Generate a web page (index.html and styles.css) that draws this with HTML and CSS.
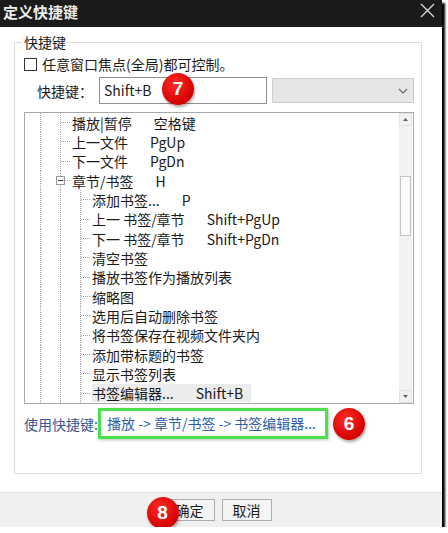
FILE: index.html
```html
<!DOCTYPE html>
<html lang="zh-CN">
<head>
    <meta charset="UTF-8">
    <title>定义快捷键</title>
    <link rel="stylesheet" href="styles.css">
</head>
<body>
    <div class="window">
        <div class="titlebar">
            <span class="title">定义快捷键</span>
            <svg class="close" width="15" height="15" viewBox="0 0 15 15">
                <path d="M1 1 L14 14 M14 1 L1 14" stroke="#d8d8d8" stroke-width="1.4" fill="none"/>
            </svg>
        </div>

        <div class="content">
            <div class="group">
                <span class="group-title">快捷键</span>

                <div class="check-row">
                    <span class="checkbox"></span>
                    <span>任意窗口焦点(全局)都可控制。</span>
                </div>

                <div class="key-row">
                    <span class="key-label">快捷键：</span>
                    <div class="key-input">
                        Shift+B
                        <span class="badge badge-input">7</span>
                    </div>
                    <div class="combo">
                        <svg width="10" height="6" viewBox="0 0 10 6">
                            <path d="M1 1 L5 5 L9 1" stroke="#6a6a6a" stroke-width="1.2" fill="none"/>
                        </svg>
                    </div>
                </div>

                <div class="tree">
                    <div class="tree-list">
                        <div class="row"><span class="g"></span><span class="c"></span><span class="label">播放|暂停<span class="key">空格键</span></span></div>
                        <div class="row"><span class="g"></span><span class="c"></span><span class="label">上一文件<span class="key">PgUp</span></span></div>
                        <div class="row"><span class="g"></span><span class="c"></span><span class="label">下一文件<span class="key">PgDn</span></span></div>
                        <div class="row"><span class="g"></span><span class="c open"><span class="box"></span></span><span class="label">章节/书签<span class="key">H</span></span></div>
                        <div class="row"><span class="g"></span><span class="g"></span><span class="c"></span><span class="label">添加书签...<span class="key">P</span></span></div>
                        <div class="row"><span class="g"></span><span class="g"></span><span class="c"></span><span class="label">上一 书签/章节<span class="key">Shift+PgUp</span></span></div>
                        <div class="row"><span class="g"></span><span class="g"></span><span class="c"></span><span class="label">下一 书签/章节<span class="key">Shift+PgDn</span></span></div>
                        <div class="row"><span class="g"></span><span class="g"></span><span class="c"></span><span class="label">清空书签</span></div>
                        <div class="row"><span class="g"></span><span class="g"></span><span class="c"></span><span class="label">播放书签作为播放列表</span></div>
                        <div class="row"><span class="g"></span><span class="g"></span><span class="c"></span><span class="label">缩略图</span></div>
                        <div class="row"><span class="g"></span><span class="g"></span><span class="c"></span><span class="label">选用后自动删除书签</span></div>
                        <div class="row"><span class="g"></span><span class="g"></span><span class="c"></span><span class="label">将书签保存在视频文件夹内</span></div>
                        <div class="row"><span class="g"></span><span class="g"></span><span class="c"></span><span class="label">添加带标题的书签</span></div>
                        <div class="row"><span class="g"></span><span class="g"></span><span class="c"></span><span class="label">显示书签列表</span></div>
                        <div class="row"><span class="g"></span><span class="g"></span><span class="c"></span><span class="label selected">书签编辑器...<span class="key">Shift+B</span></span></div>
                    </div>
                    <div class="scrollbar">
                        <div class="arrow">
                            <svg width="5" height="3" viewBox="0 0 5 3"><path d="M0 3 L2.5 0 L5 3 Z" fill="#606060"/></svg>
                        </div>
                        <div class="track">
                            <div class="thumb"></div>
                        </div>
                        <div class="arrow">
                            <svg width="5" height="3" viewBox="0 0 5 3"><path d="M0 0 L2.5 3 L5 0 Z" fill="#606060"/></svg>
                        </div>
                    </div>
                </div>

                <div class="usage-row">
                    <span class="usage-label">使用快捷键:</span>
                    <span class="usage-path">播放 -&gt; 章节/书签 -&gt; 书签编辑器...</span>
                    <span class="badge badge-inline">6</span>
                </div>
            </div>
        </div>

        <div class="footer">
            <button class="btn">确定<span class="badge badge-ok">8</span></button>
            <button class="btn">取消</button>
        </div>
    </div>
</body>
</html>
```

FILE: styles.css
```css
body, html {
    margin: 0;
    padding: 0;
    background: #fff;
    font-family: "Noto Sans CJK SC", "Noto Sans", sans-serif;
    font-size: 14px;
    color: #1a1a1a;
}

.window {
    width: 442px;
    height: 527px;
    display: flex;
    flex-direction: column;
    background: #fff;
    box-shadow: 3px 3px 2px #000;
}

.titlebar {
    height: 27px;
    flex-shrink: 0;
    background: #1b1b1b;
    color: #ececec;
    display: flex;
    align-items: center;
    justify-content: space-between;
    padding: 0 7px 0 3px;
}

.title {
    font-size: 15px;
    font-weight: bold;
    line-height: 20px;
    margin-top: -3px;
}

.close {
    margin-top: -6px;
}

.content {
    flex: 1;
    padding: 15px 20px 0 14px;
}

.group {
    position: relative;
    height: 432px;
    box-sizing: border-box;
    border: 1px solid #dcdcdc;
    padding: 0 7px 0 9px;
}

.group-title {
    display: block;
    width: max-content;
    margin: -10px 0 0 -2px;
    padding: 0 2px;
    background: #fff;
    line-height: 18px;
}

.check-row {
    height: 20px;
    margin-top: 3px;
    display: flex;
    align-items: center;
    gap: 5px;
    line-height: 18px;
}

.checkbox {
    width: 11px;
    height: 11px;
    border: 1px solid #333;
    background: #fff;
}

.key-row {
    height: 27px;
    margin-top: 3px;
    display: flex;
    align-items: center;
}

.key-label {
    width: 62px;
    margin-left: 13px;
    line-height: 18px;
}

.key-input {
    position: relative;
    width: 168px;
    height: 27px;
    box-sizing: border-box;
    border: 1px solid #8f8f8f;
    padding-left: 4px;
    line-height: 24px;
}

.combo {
    width: 142px;
    height: 25px;
    margin-left: 5px;
    box-sizing: border-box;
    border: 1px solid #cdcdcd;
    background: #e6e6e6;
    display: flex;
    align-items: center;
    justify-content: flex-end;
    padding-right: 5px;
}

.tree {
    margin-top: 8px;
    height: 292px;
    box-sizing: border-box;
    border: 1px solid #a9a9a9;
    display: flex;
}

.tree-list {
    flex: 1;
    padding-left: 5px;
    overflow: hidden;
}

.row {
    height: 19.33px;
    display: flex;
    align-items: center;
    white-space: nowrap;
}

.g {
    width: 20px;
    align-self: stretch;
    background: repeating-linear-gradient(to bottom, #a4a4a4 0 1px, transparent 1px 2px) 10px 0 / 1px 100% no-repeat;
}

.c {
    width: 20px;
    align-self: stretch;
    background:
        repeating-linear-gradient(to bottom, #a4a4a4 0 1px, transparent 1px 2px) 10px 0 / 1px 100% no-repeat,
        repeating-linear-gradient(to right, #a4a4a4 0 1px, transparent 1px 2px) 11px 50% / 9px 1px no-repeat;
}

.c.open {
    display: flex;
    align-items: center;
    justify-content: center;
}

.box {
    position: relative;
    width: 7px;
    height: 7px;
    border: 1px solid #9a9a9a;
    background: #fff;
}

.box::after {
    content: '';
    position: absolute;
    left: 1px;
    top: 3px;
    width: 5px;
    height: 1px;
    background: #333;
}

.label {
    margin-left: 2px;
    line-height: 18px;
}

.label.selected {
    background: #ececec;
    padding-right: 8px;
}

.key {
    margin-left: 22px;
}

.scrollbar {
    width: 13px;
    margin-right: 1px;
    background: #f2f2f2;
    display: flex;
    flex-direction: column;
}

.arrow {
    height: 13px;
    box-sizing: border-box;
    border: 1px solid #e2e2e2;
    display: flex;
    align-items: center;
    justify-content: center;
}

.track {
    flex: 1;
}

.thumb {
    margin: 50px 1px 0 1px;
    height: 60px;
    box-sizing: border-box;
    border: 1px solid #c4c4c4;
    background: #fafafa;
}

.usage-row {
    margin-top: 4px;
    height: 31px;
    display: flex;
    align-items: center;
}

.usage-label {
    color: #3a5593;
    line-height: 18px;
    width: 74px;
}

.usage-path {
    width: 230px;
    height: 31px;
    box-sizing: border-box;
    border: 3px solid #4be34b;
    box-shadow: 1px 1px 3px rgba(0, 0, 0, 0.25);
    padding-left: 6px;
    line-height: 25px;
    color: #2f5ea8;
    white-space: nowrap;
}

.badge {
    width: 32px;
    height: 32px;
    border-radius: 50%;
    background: radial-gradient(circle at 40% 35%, #ff2b24, #d40000 70%, #b00000);
    color: #fff;
    font-family: "Liberation Sans", Arial, sans-serif;
    font-weight: bold;
    font-size: 19px;
    display: flex;
    align-items: center;
    justify-content: center;
    box-shadow: 1px 2px 3px rgba(0, 0, 0, 0.35);
    z-index: 5;
}

.badge-input {
    position: absolute;
    left: 62px;
    top: -5px;
}

.badge-inline {
    margin-left: 5px;
}

.badge-ok {
    position: absolute;
    left: -19px;
    top: -3px;
}

.footer {
    height: 35px;
    flex-shrink: 0;
    box-sizing: border-box;
    border-top: 1px solid #dfdfdf;
    background: #f0f0f0;
    display: flex;
    justify-content: center;
    gap: 7px;
    padding: 6px 6px 0 0;
}

.btn {
    position: relative;
    width: 50px;
    height: 22px;
    border: 1px solid #adadad;
    background: #f4f4f4;
    font-family: "Noto Sans CJK SC", sans-serif;
    font-size: 14px;
    color: #1a1a1a;
    padding: 0;
    line-height: 18px;
}
```
